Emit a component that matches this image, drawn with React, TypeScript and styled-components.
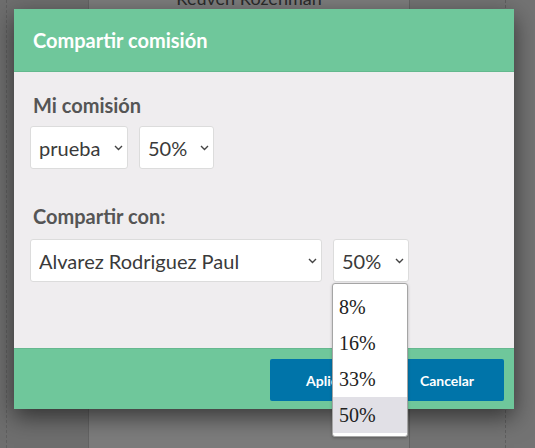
import React from "react";
import styled, { createGlobalStyle } from "styled-components";

const Global = createGlobalStyle`
  html, body { margin: 0; padding: 0; }
  body {
    width: 535px; height: 448px; overflow: hidden;
    background: #717171;
    font-family: Lato, "Noto Sans", sans-serif;
  }
`;

const Page = styled.div`
  position: relative;
  width: 535px;
  height: 448px;
  display: flex;
  overflow: hidden;
`;

const Gutter = styled.div<{ $w: number; $bg: string }>`
  width: ${(p) => p.$w}px;
  flex: none;
  background: ${(p) => p.$bg};
  position: relative;
`;

const DashLine = styled.div<{ $x: number }>`
  position: absolute;
  top: 0;
  bottom: 0;
  left: ${(p) => p.$x}px;
  border-left: 1px dashed #5f5f5f;
`;

const CenterCol = styled.div`
  width: 320px;
  flex: none;
  background: #7c7c7c;
  border-left: 1px solid #646464;
  border-right: 1px solid #646464;
  display: flex;
  justify-content: center;
`;

const BehindName = styled.div`
  margin-top: -13px;
  font-size: 18px;
  color: #2b2b2b;
  line-height: 22px;
  height: 22px;
`;

const Modal = styled.div`
  position: absolute;
  left: 14px;
  top: 9px;
  width: 500px;
  display: flex;
  flex-direction: column;
  box-shadow: 0 8px 22px rgba(0, 0, 0, 0.55);
`;

const Header = styled.div`
  background: #6fc79b;
  border-bottom: 1px solid #63b98e;
  padding: 19px 0 0 19px;
  box-sizing: border-box;
  height: 63px;
`;

const Title = styled.h2`
  margin: 0;
  color: #ffffff;
  font-size: 20px;
  font-weight: 700;
  line-height: 24px;
`;

const Body = styled.div`
  background: #efedef;
  height: 276px;
  padding: 21px 16px 0 16px;
  box-sizing: border-box;
`;

const Label = styled.div<{ $mt?: number; $mb: number }>`
  margin: ${(p) => p.$mt ?? 0}px 0 ${(p) => p.$mb}px 3px;
  font-size: 20px;
  font-weight: 700;
  color: #555555;
  line-height: 24px;
`;

const Row = styled.div`
  display: flex;
  gap: 11px;
  position: relative;
`;

const SelectBox = styled.div<{ $w: number }>`
  position: relative;
  width: ${(p) => p.$w}px;
  height: 43px;
  box-sizing: border-box;
  background: #ffffff;
  border: 1px solid #dcdcdc;
  border-radius: 3px;
  display: flex;
  align-items: center;
  padding: 0 4px 0 8px;
  font-size: 20px;
  color: #3a3a3a;
`;

const SelectText = styled.span`
  flex: 1;
  white-space: nowrap;
  overflow: hidden;
`;

const Chevron = () => (
  <svg width="9" height="6" viewBox="0 0 9 6" style={{ flex: "none" }}>
    <path d="M1 1 L4.5 4.5 L8 1" fill="none" stroke="#444" strokeWidth="1.4" />
  </svg>
);

const DropList = styled.div`
  position: absolute;
  left: 302px;
  top: 44px;
  width: 76px;
  box-sizing: border-box;
  background: #ffffff;
  border: 1px solid #a5a5a5;
  border-radius: 3px;
  padding: 5px 0 3px;
  box-shadow: 0 1px 3px rgba(0, 0, 0, 0.25);
  z-index: 5;
`;

const DropOption = styled.div<{ $active?: boolean }>`
  height: 36px;
  display: flex;
  align-items: center;
  padding-left: 6px;
  font-family: "Liberation Serif", "Times New Roman", serif;
  font-size: 20px;
  color: #222222;
  background: ${(p) => (p.$active ? "#e1e0e6" : "transparent")};
`;

const Footer = styled.div`
  background: #6fc79b;
  border-top: 1px solid #66b88f;
  height: 61px;
  box-sizing: border-box;
  padding: 10px 10px 0 0;
  display: flex;
  justify-content: flex-end;
  gap: 4px;
`;

const Button = styled.button<{ $w: number }>`
  width: ${(p) => p.$w}px;
  height: 42px;
  border: none;
  border-radius: 2px;
  background: #0074a9;
  color: #ffffff;
  font-family: Lato, "Noto Sans", sans-serif;
  font-weight: 700;
  font-size: 14px;
  padding: 0;
`;

export default function App() {
  return (
    <>
      <Global />
      <Page>
        <Gutter $w={88} $bg="#6e6e6e">
          <DashLine $x={6} />
        </Gutter>
        <CenterCol>
          <BehindName>Reuven Rozenman</BehindName>
        </CenterCol>
        <Gutter $w={125} $bg="#737373">
          <DashLine $x={95} />
        </Gutter>
        <Modal>
          <Header>
            <Title>Compartir comisión</Title>
          </Header>
          <Body>
            <Label $mb={9}>Mi comisión</Label>
            <Row>
              <SelectBox $w={98}>
                <SelectText>prueba</SelectText>
                <Chevron />
              </SelectBox>
              <SelectBox $w={75}>
                <SelectText>50%</SelectText>
                <Chevron />
              </SelectBox>
            </Row>
            <Label $mt={35} $mb={11}>Compartir con:</Label>
            <Row>
              <SelectBox $w={292}>
                <SelectText>Alvarez Rodriguez Paul</SelectText>
                <Chevron />
              </SelectBox>
              <SelectBox $w={76}>
                <SelectText>50%</SelectText>
                <Chevron />
              </SelectBox>
              <DropList>
                <DropOption>8%</DropOption>
                <DropOption>16%</DropOption>
                <DropOption>33%</DropOption>
                <DropOption $active>50%</DropOption>
              </DropList>
            </Row>
          </Body>
          <Footer>
            <Button $w={116}>Aplicar</Button>
            <Button $w={114}>Cancelar</Button>
          </Footer>
        </Modal>
      </Page>
    </>
  );
}
